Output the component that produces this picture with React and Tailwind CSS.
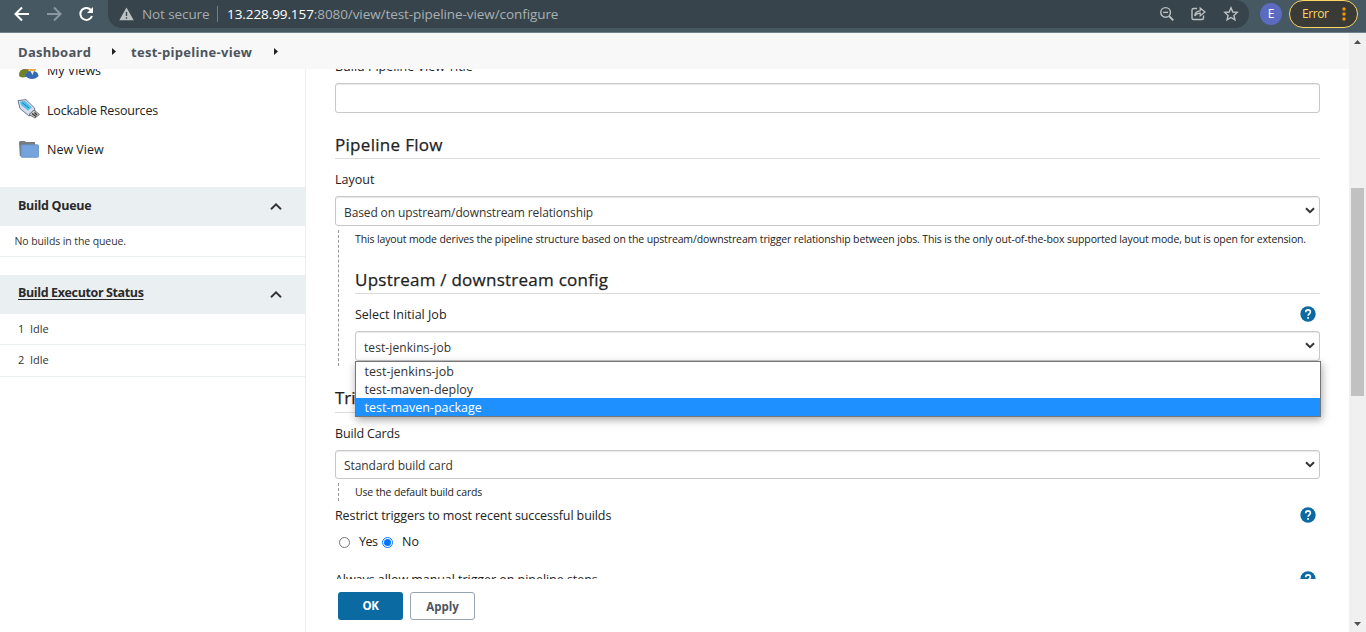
import React from "react";

const Chevron = () => (
  <svg className="h-[7px] w-[10px]" viewBox="0 0 10 7" fill="none">
    <path d="M1 1.3 5 5.2 9 1.3" stroke="#333" strokeWidth="2" />
  </svg>
);

const Caret = () => (
  <svg className="h-[7px] w-[12px]" viewBox="0 0 12 7" fill="none">
    <path d="M1 6.2 6 1.3 11 6.2" stroke="#333" strokeWidth="1.9" />
  </svg>
);

const Help = () => (
  <svg className="h-4 w-4 shrink-0" viewBox="0 0 16 16" fill="none">
    <circle cx="8" cy="8" r="7.7" fill="#0b6aa2" />
    <path d="M5.7 6.2C5.7 3 10.4 3.2 10.4 6 10.4 7.8 8.1 7.8 8.1 9.8" stroke="#fff" strokeWidth="1.6" />
    <rect x="7.2" y="11.1" width="1.7" height="1.7" fill="#fff" />
  </svg>
);

const Select = ({ children, height }) => (
  <div className={`flex items-center justify-between rounded-[3px] border border-[#c8c8c8] bg-white pl-2 pr-1 text-[12px] text-[#333] shadow-[inset_0_1px_1px_#e8e8e8] ${height}`}>
    <span className="pt-[3px]">{children}</span>
    <span className="pb-px"><Chevron /></span>
  </div>
);

function BrowserBar() {
  return (
    <header className="flex h-[33px] shrink-0 border-b border-[#71818a] bg-[#465861] text-[13.5px]">
      <div className="flex h-7 w-[108px] shrink-0 items-center pl-[14px]">
        <svg className="h-7 w-20" viewBox="0 0 80 28" fill="none" strokeWidth="2">
          <path d="M15 14H2M8 7.5 1.5 14 8 20.5" stroke="#fff" />
          <path d="M33 14H46M40 7.5 46.5 14 40 20.5" stroke="#8a979e" />
          <path d="M77.3 10.5A6 6 0 1 0 78 16" stroke="#fff" />
          <path d="M79 7V13H73Z" fill="#fff" />
        </svg>
      </div>
      <div className="flex h-7 w-[1141px] shrink-0 items-center rounded-r-[14px] rounded-bl-[14px] bg-[#38444b] pl-[11px]">
        <svg className="h-3.5 w-[15px]" viewBox="0 0 15 14">
          <path d="M7.5 .5 14.7 13.3H.3Z" fill="#bcc1c3" />
          <path d="M6.8 5H8.2V9H6.8ZM6.8 10.2H8.2V11.7H6.8Z" fill="#38444b" />
        </svg>
        <span className="ml-2 w-[75px] whitespace-nowrap tracking-[-0.1px] text-[#a5abae]">Not secure</span>
        <span className="mr-[9px] h-4 w-px bg-[#718087]" />
        <span className="whitespace-nowrap tracking-[-0.080px] text-[#a9b0b3]"><span className="text-white">13.228.99.157</span>:8080/view/test-pipeline-view/configure</span>
        <svg className="ml-auto mr-[10px] h-7 w-20" viewBox="0 0 80 28" fill="none" stroke="#bcc1c3" strokeWidth="1.4">
          <circle cx="6.6" cy="12.4" r="4.8" /><path d="M10 16 14.3 20.3" strokeWidth="1.9" /><path d="M4.2 12.4H9" />
          <path d="M38 8.5H34.5Q33 8.500 33 10V18Q33 19.500 34.500 19.500H43Q44.500 19.500 44.500 18V15.500" />
          <path d="M35.700 16C36 12.500 38 11 41.200 10.800V8L46 12 41.200 15.700V13.200C38.700 13.200 37 14 35.700 16Z" strokeWidth="1.200" />
          <path d="M72 7.800 73.800 12 78.200 12.400 74.900 15.400 75.900 19.800 72 17.500 68.100 19.800 69.100 15.400 65.800 12.400 70.200 12Z" />
        </svg>
      </div>
      <div className="ml-[11px] mt-[3px] flex h-[22px] w-[22px] shrink-0 items-center justify-center rounded-full bg-[#5c6bc0] text-[12px] text-white">E</div>
      <div className="ml-[7px] flex h-7 w-[69px] shrink-0 items-center justify-between rounded-full border-[1.500px] border-[#fdd663] bg-[#3a3a36] pl-3 pr-[11px] text-[12px] tracking-[-0.4px] text-[#fdd663]">
        Error
        <svg className="h-[14px] w-1" viewBox="0 0 4 14" fill="#f29900"><circle cx="2" cy="2" r="1.700" /><circle cx="2" cy="7" r="1.700" /><circle cx="2" cy="12" r="1.700" /></svg>
      </div>
    </header>
  );
}

const Arrow = () => <svg className="-mt-0.5 h-[7px] w-1" viewBox="0 0 4 7"><path d="M0 0 4 3.500 0 7Z" fill="#222" /></svg>;

function Sidebar() {
  return (
    <aside className="flex w-[306px] shrink-0 flex-col overflow-hidden border-r border-[#eaeff2]">
      <nav className="flex h-[118px] flex-col text-[12.500px] text-[#222]">
        <div className="flex h-[22px] items-start gap-2 pl-[19px]">
          <svg className="-mt-2 h-[18px] w-5" viewBox="0 0 20 18">
            <circle cx="7" cy="6" r="4" fill="#c98a3c" /><path d="M0 14Q0 8 6 8 11 8 12 15L4 16.500Q0 16 0 14Z" fill="#71802c" />
            <circle cx="13.500" cy="6.500" r="4" fill="#efaa45" /><path d="M6.500 15Q7 10 13 10 19 10 19.500 15 17 18 13 18 9 18 6.500 15Z" fill="#3569b5" /><path d="M11.500 10H15L13.500 14Z" fill="#e9eef6" />
          </svg>
          <span className="-mt-2 leading-5">My Views</span>
        </div>
        <div className="flex h-[39px] items-center gap-[7px] pl-[17px]">
          <svg className="-mt-1 h-[20px] w-[23px]" viewBox="0 0 23 20">
            <path d="M1 1.500 9 .7 17.500 9 18 14 12 17 3 9.500Z" fill="#d6deed" stroke="#6e7591" strokeWidth="1" />
            <path d="M3 2.500 8 2 15 8.500 11 11.500 4 6Z" fill="#52bfea" /><path d="M5 3.500 12 9" stroke="#1d82b8" />
            <path d="M17 11 22.500 15.500 18 19 12 15.500Z" fill="#c9c9cc" stroke="#555" strokeWidth=".8" /><path d="M15 14.500 19 17.500M17.500 13.500 20 16" stroke="#333" strokeWidth="1.300" />
          </svg>
          <span className="pt-0.5 tracking-[-0.2px]">Lockable Resources</span>
        </div>
        <div className="flex h-[40px] items-center gap-2 pl-[19px]">
          <svg className="-mt-px h-[17px] w-5" viewBox="0 0 20 17">
            <path d="M0 1.500Q0 0 1.500 0H5.500L7 1H16V15H.8Z" fill="#777b7d" /><rect x="2" y="3.800" width="17.500" height="12.500" rx="1" fill="#75a4dc" stroke="#5f8fc8" strokeWidth=".8" />
          </svg>
          <span>New View</span>
        </div>
      </nav>
      <div className="flex h-[39px] shrink-0 items-center justify-between bg-[#eaeff2] pl-[18px] pr-[23px] text-[12.500px] font-bold text-[#2a2a2a]"><span className="tracking-[-0.3px]">Build Queue</span><Caret /></div>
      <div className="flex h-[31px] shrink-0 items-center border-b border-[#eaeff2] pl-[14.500px] pt-[2px] text-[10.500px] tracking-[-0.100px] text-[#333]">No builds in the queue.</div>
      <div className="mt-[18px] flex h-[39px] shrink-0 items-center justify-between bg-[#eaeff2] pl-[18px] pr-[23px] text-[12.500px] font-bold text-[#2a2a2a]"><span className="-mt-0.5 tracking-[-0.380px] underline underline-offset-2">Build Executor Status</span><Caret /></div>
      <div className="flex h-[31px] shrink-0 items-center border-b border-[#eaeff2] pl-[18px] text-[11px] text-[#333]"><span className="w-3">1</span>Idle</div>
      <div className="flex h-8 shrink-0 items-center border-b border-[#eaeff2] pl-[18px] text-[11px] text-[#333]"><span className="w-3">2</span>Idle</div>
    </aside>
  );
}

function Form() {
  return (
    <div className="flex h-[510px] shrink-0 flex-col overflow-hidden pl-[29px] pr-[29px] text-[12.500px] text-[#222]">
      <div className="h-[14px] shrink-0 overflow-hidden"><div className="-mt-3 leading-5">Build Pipeline View Title</div></div>
      <div className="h-[30px] shrink-0 rounded-[3px] border border-[#c8c8c8] shadow-[inset_0_1px_1px_#e8e8e8]" />
      <h2 className="h-[46px] shrink-0 border-b border-[#dcdcdc] pt-5 text-[17px] leading-6 tracking-[0.300px] [-webkit-text-stroke:0.25px_#222]">Pipeline Flow</h2>
      <div className="h-[37px] shrink-0 pt-[11px] leading-5">Layout</div>
      <Select height="h-[30px] shrink-0 tracking-[-0.120px]">Based on upstream/downstream relationship</Select>
      <div className="ml-[3px] mt-1 h-[136px] shrink-0 border-l border-dashed border-[#999] pl-4">
        <p className="h-[18px] whitespace-nowrap text-[10.500px] leading-[18px] tracking-[-0.130px]">This layout mode derives the pipeline structure based on the upstream/downstream trigger relationship between jobs. This is the only out-of-the-box supported layout mode, but is open for extension.</p>
        <h2 className="h-[46px] border-b border-[#dcdcdc] pt-5 text-[17px] leading-6 tracking-[0.250px] [-webkit-text-stroke:0.25px_#222]">Upstream / downstream config</h2>
        <div className="flex h-[37px] items-start justify-between pr-1 pt-3"><span className="-mt-px leading-5">Select Initial Job</span><Help /></div>
        <div className="relative">
          <Select height="h-[30px] tracking-[0.080px]">test-jenkins-job</Select>
          <ul className="absolute left-0 top-[30px] z-10 h-14 w-[966px] border border-[#767676] bg-white text-[12.500px] leading-[20px] text-[#333] shadow-[1px_3px_8px_rgba(0,0,0,0.35)]">
            <li className="h-[18px] pl-[8.500px]">test-jenkins-job</li>
            <li className="h-[18px] pl-[8.500px]">test-maven-deploy</li>
            <li className="h-[18px] bg-[#1e90ff] pl-[8.500px] text-white">test-maven-package</li>
          </ul>
        </div>
      </div>
      <h2 className="h-[47px] shrink-0 border-b border-[#dcdcdc] pt-5 text-[17px] leading-6 [-webkit-text-stroke:0.25px_#222]">Trigger Options</h2>
      <div className="h-[37px] shrink-0 pt-[11px] leading-5 tracking-[-0.150px]">Build Cards</div>
      <Select height="h-[29px] shrink-0 tracking-[-0.070px]">Standard build card</Select>
      <div className="ml-[3px] mt-1 h-[18px] shrink-0 border-l border-dashed border-[#999] pl-4 text-[10.500px] leading-[18px] tracking-[-0.150px]">Use the default build cards</div>
      <div className="flex h-[29px] shrink-0 items-start justify-between pr-1 pt-[5px] tracking-[-0.100px]"><span className="leading-5">Restrict triggers to most recent successful builds</span><span className="pt-px"><Help /></span></div>
      <div className="flex h-6 shrink-0 items-center pl-1">
        <span className="mr-[9px] h-[11px] w-[11px] rounded-full border border-[#767676]" />
        <span className="w-[23px] tracking-[-0.500px]">Yes</span>
        <span className="mr-[9px] flex h-[11px] w-[11px] items-center justify-center rounded-full border border-[#0075ff]"><span className="h-[7px] w-[7px] rounded-full bg-[#0075ff]" /></span>
        <span>No</span>
      </div>
      <div className="mt-[17px] flex h-4 shrink-0 items-center justify-between pr-1 tracking-[-0.050px]"><span className="pt-0.5">Always allow manual trigger on pipeline steps</span><Help /></div>
    </div>
  );
}

export default function App() {
  return (
    <div className="flex h-[632px] w-[1366px] flex-col overflow-hidden bg-white font-['Open_Sans','Noto_Sans',sans-serif]">
      <BrowserBar />
      <div className="flex min-h-0 flex-1">
        <div className="flex w-[1349px] shrink-0 flex-col">
          <div className="flex h-9 shrink-0 items-center bg-[#f8f8f8] pl-[18px] pt-[3px] text-[13px] font-bold tracking-[0.280px] text-[#4d545d]">
            <span className="w-[94px]">Dashboard</span><Arrow />
            <span className="ml-[15px] w-[143px] whitespace-nowrap">test-pipeline-view</span><Arrow />
          </div>
          <div className="flex min-h-0 flex-1">
            <Sidebar />
            <main className="flex w-[1043px] flex-col">
              <Form />
              <div className="flex gap-[7px] pl-8 pt-[13px] text-[11.500px] font-bold">
                <button className="h-7 w-[65px] rounded-[3px] bg-[#0b6aa2] tracking-[-0.300px] text-white">OK</button>
                <button className="h-7 w-[65px] rounded-[3px] border border-[#98a3b0] pt-px text-[#4d545d]">Apply</button>
              </div>
            </main>
          </div>
        </div>
        <div className="flex w-[17px] flex-col items-center bg-[#f0f0f0]">
          <svg className="mt-[7px] h-1 w-[7px]" viewBox="0 0 7 4"><path d="M0 4 3.500 0 7 4Z" fill="#505050" /></svg>
          <div className="mr-px mt-36 h-[208px] w-[13px] bg-[#c1c1c1]" />
          <svg className="mb-[6px] mt-auto h-1 w-[7px]" viewBox="0 0 7 4"><path d="M0 0 3.500 4 7 0Z" fill="#505050" /></svg>
        </div>
      </div>
    </div>
  );
}
